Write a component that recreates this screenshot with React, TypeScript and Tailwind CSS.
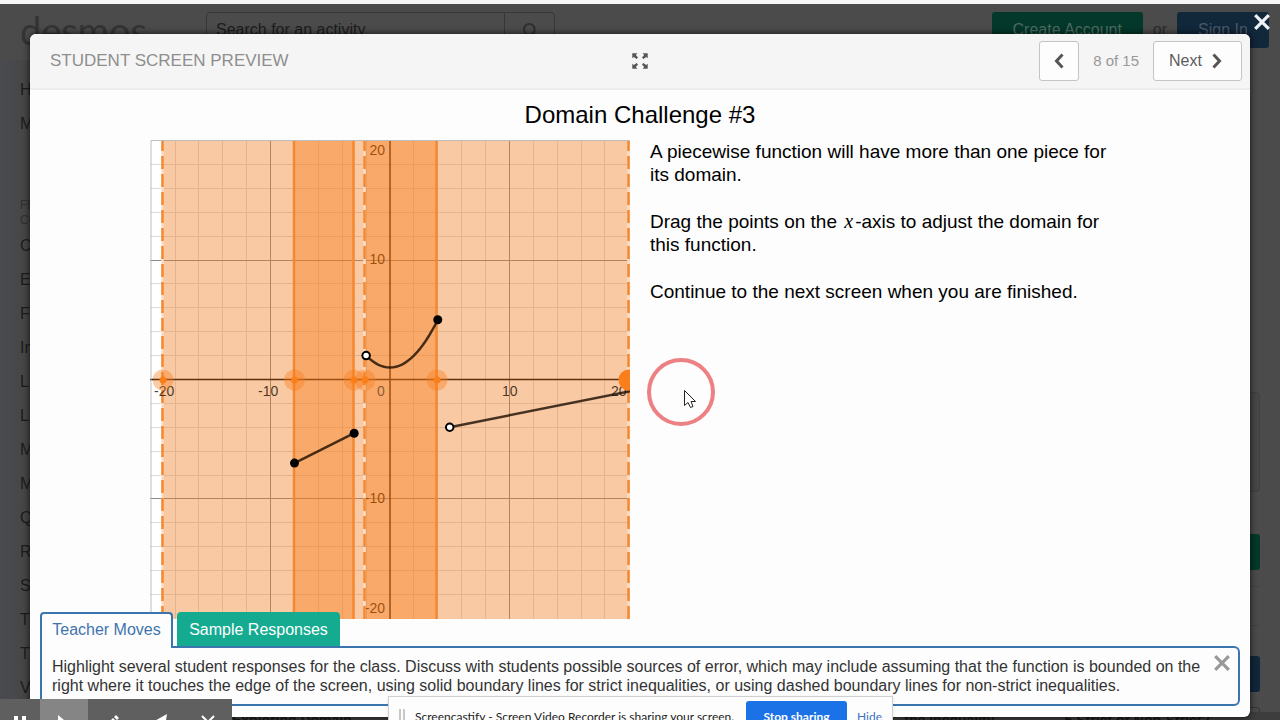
import { useState } from "react";
import { Search } from "lucide-react";

const TOPICS = [
  "Circles",
  "Exponentials",
  "Functions",
  "Inequalities",
  "Linear",
  "Lines",
  "Modeling",
  "Marbleslides",
  "Quadratics",
  "Rational",
  "Statistics",
  "Transformations",
  "Trigonometry",
  "Variables",
];

// plot units: one axis unit in pixels, origin inside the plot box
const UNIT = 11.94;
const OX = 240;
const OY = 239.5;
const px = (x: number) => OX + x * UNIT;
const py = (y: number) => OY - y * UNIT;
const snap = (v: number) => Math.floor(v) + 0.5;

const MINOR = [-18, -16, -14, -12, -8, -6, -4, -2, 2, 4, 6, 8, 12, 14, 16, 18];
const HANDLES = [13, 144.5, 204, 215, 287];

function curvePath() {
  const pts: string[] = [];
  for (let x = -2; x <= 4.001; x += 0.25) {
    pts.push(`${px(x)},${py((x * x) / 4 + 1)}`);
  }
  return "M" + pts.join(" L");
}

function GridLines({ at }: { at: number[] }) {
  return (
    <>
      {at.map((n) => (
        <g key={n}>
          <line x1={snap(px(n))} x2={snap(px(n))} y1="0" y2="479" />
          <line y1={snap(py(n))} y2={snap(py(n))} x1="0" x2="480" />
        </g>
      ))}
    </>
  );
}

function Graph() {
  return (
    <svg
      viewBox="0 0 480 479"
      className="h-[479px] w-[480px] shrink-0"
      role="img"
      aria-label="Graph of a piecewise function"
    >
      <rect width="480" height="479" fill="#fff" />
      <g stroke="#dcdcdc">
        <GridLines at={MINOR} />
      </g>
      <g stroke="#8a8a8a">
        <GridLines at={[-10, 10]} />
      </g>
      <g stroke="#000" strokeWidth="1.5">
        <line x1={OX} x2={OX} y1="0" y2="479" />
        <line x1="0" x2="480" y1={OY} y2={OY} />
      </g>
      <g fill="#000" fontSize="14" textAnchor="end" fontFamily="'Liberation Sans', Arial, sans-serif">
        <text x="235" y="15">20</text>
        <text x="235" y="124">10</text>
        <text x="235" y="363">-10</text>
        <text x="235" y="473">-20</text>
      </g>
      <g fill="#f0781a">
        <rect x="13" width="131" height="479" opacity="0.4" />
        <rect x="204" width="11" height="479" opacity="0.4" />
        <rect x="287" width="193" height="479" opacity="0.4" />
      </g>
      <g fill="#f67a18">
        <rect x="144" width="60" height="479" opacity="0.64" />
        <rect x="215" width="72" height="479" opacity="0.64" />
      </g>
      <g stroke="#f4872f" strokeWidth="2.5">
        <line x1="144" x2="144" y1="0" y2="479" />
        <line x1="203.5" x2="203.5" y1="0" y2="479" />
        <line x1="286.5" x2="286.5" y1="0" y2="479" />
        <g strokeDasharray="13 5" strokeDashoffset="2">
          {[12.5, 214.5, 478.5].map((x) => (
            <g key={x}>
              <line x1={x} x2={x} y1="0" y2="479" stroke="#fbdcc2" strokeDasharray="none" />
              <line x1={x} x2={x} y1="0" y2="479" />
            </g>
          ))}
        </g>
      </g>
      <g fill="#1a0c00" fillOpacity="0.8" fontSize="14" fontFamily="'Liberation Sans', Arial, sans-serif">
        <text x="4" y="256">-20</text>
        <text x="108" y="256">-10</text>
        <text x="227" y="256" fillOpacity="0.55">0</text>
        <text x="352" y="256">10</text>
        <text x="461" y="256">20</text>
      </g>
      <g fill="none" stroke="#1a0c00" strokeOpacity="0.8" strokeWidth="2.5">
        <line x1={px(-8)} y1={py(-7)} x2={px(-3)} y2={py(-4.5)} />
        <path d={curvePath()} />
        <line x1={px(5)} y1={py(-4)} x2={px(20.2)} y2={py(-0.96)} />
      </g>
      <g fill="#fa7e19">
        {HANDLES.map((x) => (
          <g key={x}>
            <circle cx={x} cy="240" r="10.5" opacity="0.4" />
            <circle cx={x} cy="240" r="3.5" />
          </g>
        ))}
        <circle cx="479" cy="240" r="10.5" />
      </g>
      <g fill="#000">
        <circle cx={px(-8)} cy={py(-7)} r="4.5" />
        <circle cx={px(-3)} cy={py(-4.5)} r="4.5" />
        <circle cx={px(4)} cy={py(5)} r="4.5" />
      </g>
      <g fill="#fff" stroke="#000" strokeWidth="2">
        <circle cx={px(-2)} cy={py(2)} r="3.75" />
        <circle cx={px(5)} cy={py(-4)} r="3.75" />
      </g>
      <path d="M1 479V0.5H480" fill="none" stroke="#bdbdbd" />
    </svg>
  );
}

function ExpandIcon() {
  return (
    <svg viewBox="0 0 16 16" className="h-4 w-4" fill="#555">
      {[0, 90, 180, 270].map((r) => (
        <path key={r} transform={`rotate(${r} 8 8)`} d="M0.3 0.3H5.3L3.9 1.9L6 4.6L4.6 6L1.9 3.9L0.3 5.3Z" />
      ))}
    </svg>
  );
}

function Chevron({ flip }: { flip?: boolean }) {
  return (
    <svg viewBox="0 0 10 16" className="h-4 w-[10px]" fill="none" stroke="#555" strokeWidth="3">
      <path d={flip ? "M8.5 1.5L2.5 8L8.5 14.5" : "M1.5 1.5L7.5 8L1.5 14.5"} />
    </svg>
  );
}

function Cross({ className }: { className: string }) {
  return (
    <svg viewBox="0 0 16 16" className={className} fill="none" stroke="currentColor" strokeWidth="3.2">
      <path d="M1.2 1.2L14.8 14.8M14.8 1.2L1.2 14.8" />
    </svg>
  );
}

function SitePage() {
  return (
    <div className="flex h-full flex-col bg-[#4b4b4b] text-[#1c1c1c]">
      <div className="h-1 shrink-0 bg-[#f6f6f6]" />
      <header className="flex h-14 shrink-0 items-start pt-2 pr-[11px] pl-5">
        <div className="w-[186px] font-[Lato,sans-serif] text-[38px] leading-9 text-[#343434]">desmos</div>
        <div className="flex h-9 w-[349px] rounded border border-[#373737]">
          <input
            type="text"
            aria-label="Search"
            placeholder="Search for an activity"
            className="min-w-0 flex-1 px-[9px] text-base placeholder:text-[#1c1c1c]"
          />
          <button type="button" aria-label="Submit search" className="flex w-[50px] items-center justify-center border-l border-[#373737]">
            <Search className="h-4 w-4 text-[#2f2f2f]" strokeWidth={3} />
          </button>
        </div>
        <div className="ml-auto flex items-center gap-[10px]">
          <button type="button" className="h-9 w-[151px] rounded-[3px] bg-[#03382a] text-base text-[#4f6a62]">
            Create Account
          </button>
          <span className="text-base text-[#2b2b2b]">or</span>
          <button type="button" className="h-9 w-[92px] rounded-[3px] bg-[#11273a] text-base text-[#46586a]">
            Sign In
          </button>
        </div>
      </header>
      <div className="flex min-h-0 flex-1 justify-between">
        <nav className="w-[200px] overflow-hidden bg-linear-to-r from-[#4a4b4f] to-[#454545] to-15% pt-[13px] pl-5 text-base leading-[34px]">
          <a href="#home" className="block">Home</a>
          <a href="#mine" className="block">My Activities</a>
          <div className="pt-[57px] pb-px text-xs leading-[15px] text-[#303030]">
            FEATURED
            <br />
            COLLECTIONS
          </div>
          {TOPICS.map((t) => (
            <a key={t} href={`#${t.toLowerCase()}`} className="block">
              {t}
            </a>
          ))}
        </nav>
        <div className="mr-5 flex w-[300px] flex-col pt-[332px]">
          <div className="h-[100px] shrink-0 rounded border border-[#404040] bg-[#474747]" />
          <div className="mt-[42px] h-9 shrink-0 rounded-[3px] bg-[#03382a]" />
          <div className="mt-4 h-10 shrink-0 border-y border-[#434343]" />
          <div className="mt-[30px] h-9 shrink-0 rounded-[3px] bg-[#11273a]" />
          <div className="mt-[15px] h-9 shrink-0 rounded-[3px] border border-[#343434]" />
        </div>
      </div>
      {/* activity titles peeking out under the dialog */}
      <div className="flex h-2 shrink-0 bg-[#3d3d3d] pr-[70px] pl-[232px] text-sm leading-4 font-bold text-[#1a1a1a]">
        <span>Exploring Domain</span>
        <span className="ml-auto">the inequality</span>
        <span className="ml-[70px]">5 Strict or Non-Strict?</span>
      </div>
    </div>
  );
}

function TeacherPanel() {
  const [tab, setTab] = useState("moves");
  const active = "z-10 -mb-[2px] border-[#3b75ae] border-b-0 bg-[#fdfdfd] pb-[2px] text-[#3f74ad]";
  const idle = "border-[#14ab91] border-b-0 bg-[#14ab91] text-white";
  return (
    <div className="absolute inset-x-[10px] bottom-[11px]">
      <div className="flex h-[34px] gap-1">
        <button
          type="button"
          onClick={() => setTab("moves")}
          className={`relative w-[133px] rounded-t border-2 text-base ${tab === "moves" ? active : idle}`}
        >
          Teacher Moves
        </button>
        <button
          type="button"
          onClick={() => setTab("samples")}
          className={`relative w-[163px] rounded-t border-2 text-base ${tab === "samples" ? active : idle}`}
        >
          Sample Responses
        </button>
      </div>
      <div className="flex items-start gap-2 rounded-md rounded-tl-none border-2 border-[#3b75ae] bg-[#fdfdfd] py-[7px] pr-2 pl-[10px]">
        <p className="flex-1 py-[2px] text-base leading-[19px] text-[#333]">
          Highlight several student responses for the class. Discuss with students possible sources of error, which may
          include assuming that the function is bounded on the right where it touches the edge of the screen, using
          solid boundary lines for strict inequalities, or using dashed boundary lines for non-strict inequalities.
        </p>
        <button type="button" aria-label="Close notes" className="text-[#999]">
          <Cross className="h-4 w-4" />
        </button>
      </div>
    </div>
  );
}

function PreviewDialog() {
  return (
    <div
      role="dialog"
      aria-label="Student screen preview"
      className="absolute inset-x-[30px] top-[34px] bottom-[3px] flex flex-col overflow-hidden rounded-md bg-[#fdfdfd] shadow-[0_0_6px_1px_rgba(0,0,0,0.6)]"
    >
      <header className="grid h-14 shrink-0 grid-cols-[1fr_auto_1fr] items-center border-b-2 border-[#ececec] bg-[#f5f5f5] px-5">
        <h2 className="text-[17px] text-[#8e8e8e]">STUDENT SCREEN PREVIEW</h2>
        <button type="button" aria-label="Full screen">
          <ExpandIcon />
        </button>
        <div className="-mr-3 flex items-center justify-end gap-[14px]">
          <button type="button" aria-label="Previous" className="flex h-10 w-10 items-center justify-center rounded-[3px] border border-[#c4c4c4] bg-[#fdfdfd]">
            <Chevron flip />
          </button>
          <span className="text-[15px] text-[#999]">8 of 15</span>
          <button type="button" className="flex h-10 w-[89px] items-center justify-center gap-[10px] rounded-[3px] border border-[#c4c4c4] bg-[#fdfdfd] pr-1 text-base text-[#5c5c5c]">
            Next
            <Chevron />
          </button>
        </div>
      </header>
      <h1 className="pt-[10px] text-center text-2xl leading-[30px] text-black">Domain Challenge #3</h1>
      <main className="mx-auto flex w-full max-w-[980px] gap-5 pt-[10px]">
        <Graph />
        <div className="max-w-[470px] flex-1 space-y-6 text-[19px] leading-[23px] text-black">
          <p>A piecewise function will have more than one piece for its domain.</p>
          <p>
            Drag the points on the <i className="mx-[2px] font-['Liberation_Serif',serif] text-xl leading-none">x</i>
            -axis to adjust the domain for this function.
          </p>
          <p>Continue to the next screen when you are finished.</p>
        </div>
      </main>
      <TeacherPanel />
    </div>
  );
}

function RecorderBar() {
  const cell = "flex h-full w-12 items-center justify-center";
  return (
    <div className="absolute -bottom-[24px] left-0 flex h-[45px] w-[232px] bg-[#5f5f5f] text-white">
      <button type="button" aria-label="Pause" className="flex h-full w-10 items-center justify-center">
        <svg viewBox="0 0 12 12" className="h-3 w-3" fill="currentColor">
          <path d="M0 0h4v12H0zM8 0h4v12H8z" />
        </svg>
      </button>
      <button type="button" aria-label="Pointer" className={`${cell} bg-[#858585]`}>
        <svg viewBox="0 0 12 16" className="h-4 w-3" fill="currentColor">
          <path d="M0 1L12 11H6L0 15Z" />
        </svg>
      </button>
      <button type="button" aria-label="Pen" className={cell}>
        <svg viewBox="0 0 16 16" className="h-4 w-4" fill="currentColor">
          <path d="M1 12L9 4l3 3-8 8H1zM10 3l2-2 3 3-2 2z" />
        </svg>
      </button>
      <button type="button" aria-label="Eraser" className={cell}>
        <svg viewBox="0 0 18 16" className="h-4 w-[18px]" fill="currentColor">
          <path d="M0 9L16 0l-2 12-5-2-3 5z" />
        </svg>
      </button>
      <button type="button" aria-label="Close toolbar" className={cell}>
        <svg viewBox="0 0 16 16" className="h-4 w-4" fill="none" stroke="currentColor" strokeWidth="2">
          <path d="M2 2l12 12M14 2L2 14" />
        </svg>
      </button>
    </div>
  );
}

function ShareNotice() {
  return (
    <div className="absolute -bottom-[18px] left-[388px] flex h-[42px] w-[505px] items-center border border-[#d0d0d0] bg-[#fdfdfd] pl-[10px] font-[Lato,sans-serif] text-xs text-[#222] shadow">
      <span className="h-4 w-[6px] border-x-2 border-[#c8c8c8]" />
      <span className="ml-[10px] w-[331px] whitespace-nowrap">Screencastify - Screen Video Recorder is sharing your screen.</span>
      <button type="button" className="h-8 w-[101px] rounded-[3px] bg-[#1b72e6] font-bold text-white">
        Stop sharing
      </button>
      <a href="#hide" className="ml-[10px] text-[#3c70c4]">
        Hide
      </a>
    </div>
  );
}

function Pointer() {
  return (
    <div className="pointer-events-none absolute top-[358px] left-[647px]">
      <svg viewBox="0 0 68 68" className="h-[68px] w-[68px]">
        <circle cx="34" cy="34" r="32" fill="none" stroke="#ec8083" strokeWidth="4" />
        <path
          d="M37.5 32.5V47.5L41 44.5L43.5 49.5L46 48.5L44 43.5H48.5Z"
          fill="#fff"
          stroke="#222"
          strokeWidth="1"
        />
      </svg>
    </div>
  );
}

export default function App() {
  return (
    <div className="relative h-screen overflow-hidden font-['Liberation_Sans',Arial,sans-serif]">
      <SitePage />
      <PreviewDialog />
      <button type="button" aria-label="Close preview" className="absolute top-[14px] right-[10px] text-[#eef2f6]">
        <Cross className="h-4 w-4" />
      </button>
      <Pointer />
      <RecorderBar />
      <ShareNotice />
    </div>
  );
}
